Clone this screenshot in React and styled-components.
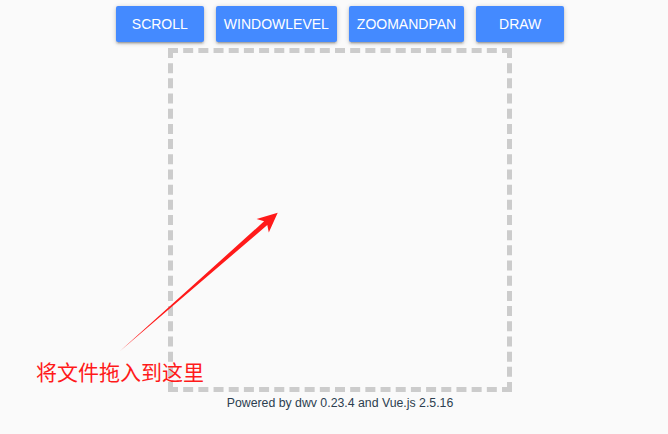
import React from "react";
import styled, { createGlobalStyle } from "styled-components";

const GlobalStyle = createGlobalStyle`
  html, body {
    margin: 0;
    padding: 0;
    background: #fafafa;
  }
  body {
    font-family: "Liberation Sans", Arial, sans-serif;
    overflow: hidden;
  }
`;

const Page = styled.div`
  position: relative;
  width: 680px;
  height: 434px;
  display: flex;
  flex-direction: column;
  align-items: center;
`;

const Toolbar = styled.div`
  display: flex;
  gap: 12px;
  margin-top: 6px;
`;

const ToolButton = styled.button`
  min-width: 88px;
  height: 36px;
  padding: 0 8px;
  border: none;
  border-radius: 2px;
  background: #448aff;
  color: #fff;
  font-family: "Liberation Sans", Arial, sans-serif;
  font-size: 14px;
  text-transform: uppercase;
  box-shadow: 0 1px 5px rgba(0, 0, 0, 0.2), 0 2px 2px rgba(0, 0, 0, 0.14),
    0 3px 1px -2px rgba(0, 0, 0, 0.12);
  cursor: pointer;
`;

const DropBox = styled.div`
  box-sizing: border-box;
  width: 344px;
  height: 344px;
  margin-top: 6px;
  border: 5px dashed #cccccc;
`;

const Footer = styled.div`
  margin-top: 4px;
  font-size: 12.3px;
  line-height: 14px;
  color: #2c3e50;
`;

const Hint = styled.div`
  position: absolute;
  left: 36px;
  top: 358px;
  font-family: "Noto Sans CJK SC", "Microsoft YaHei", sans-serif;
  font-size: 21px;
  line-height: 26px;
  color: #ff1a1a;
  white-space: nowrap;
`;

const Overlay = styled.svg`
  position: absolute;
  left: 0;
  top: 0;
  pointer-events: none;
`;

const tools = ["Scroll", "WindowLevel", "ZoomAndPan", "Draw"];

const App = () => {
  return (
    <Page>
      <GlobalStyle />
      <Toolbar>
        {tools.map(t => (
          <ToolButton key={t}>{t}</ToolButton>
        ))}
      </Toolbar>
      <DropBox />
      <Footer>Powered by dwv 0.23.4 and Vue.js 2.5.16</Footer>
      <Overlay width="680" height="434" viewBox="0 0 680 434">
        <polygon
          points="119.5,351.5 267.3,225.1 268.8,232.5 277.7,212.7 256.6,219.1 264.1,221.3"
          fill="#ff1a1a"
        />
      </Overlay>
      <Hint>将文件拖入到这里</Hint>
    </Page>
  );
};

export default App;
